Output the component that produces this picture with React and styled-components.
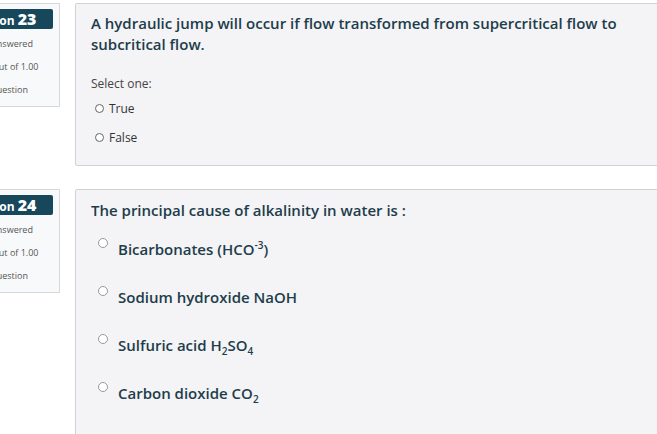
import React from "react";
import styled, { createGlobalStyle } from "styled-components";

const Global = createGlobalStyle`
  html, body {
    margin: 0;
    padding: 0;
    background: #ffffff;
    overflow: hidden;
  }
  body {
    font-family: "Open Sans", Lato, sans-serif;
    color: #1d3d4a;
  }
`;

const Page = styled.div`
  display: flex;
  flex-direction: column;
  gap: 23px;
  padding-top: 3px;
  margin-left: -52px;
  width: 720px;
`;

const QuestionRow = styled.div`
  display: flex;
  align-items: flex-start;
  gap: 15px;
`;

const Info = styled.div`
  width: 112px;
  flex: none;
  box-sizing: border-box;
  height: 104px;
  background: #f8f9fa;
  border: 1px solid #d6d8db;
  padding: 5px 6px 0 6px;
  display: flex;
  flex-direction: column;
`;

const Badge = styled.div`
  background: #17475a;
  color: #ffffff;
  height: 20px;
  border-radius: 2px;
  display: flex;
  align-items: baseline;
  padding: 0 4px 0 5px;
  font-size: 12px;
  font-weight: 700;
  line-height: 20px;
  white-space: nowrap;
  margin-bottom: 3px;

  b {
    font-size: 16px;
    margin-left: 3px;
  }
`;

const InfoLine = styled.div`
  display: flex;
  align-items: center;
  gap: 3px;
  font-size: 9px;
  color: #555;
  line-height: 23px;
  padding-left: 4px;
  white-space: nowrap;
`;

const Content = styled.div`
  flex: 1;
  box-sizing: border-box;
  background: #f4f3f6;
  border: 1px solid #d2d2d4;
  border-radius: 2px;
  padding: ${(p) => p.$pad};
  min-height: ${(p) => p.$minH};
`;

const QText = styled.div`
  font-size: 15px;
  font-weight: 600;
  line-height: 21px;
  color: #1d3d4a;
`;

const Prompt = styled.div`
  font-size: 12px;
  color: #444;
  margin-top: 20px;
  margin-bottom: 2px;
`;

const SmallOption = styled.label`
  display: flex;
  align-items: center;
  gap: 5px;
  padding-left: 4px;
  height: 29px;
  font-size: 12px;
  color: #333;
`;

const Radio = styled.span`
  display: inline-block;
  box-sizing: border-box;
  width: ${(p) => p.$size}px;
  height: ${(p) => p.$size}px;
  border-radius: 50%;
  border: 1px solid ${(p) => p.$color};
  background: #fff;
  flex: none;
`;

const BigOptions = styled.div`
  display: flex;
  flex-direction: column;
  margin-top: 14px;
`;

const BigOption = styled.label`
  display: flex;
  align-items: flex-start;
  gap: 10px;
  padding-left: 7px;
  height: 48px;
  font-size: 15px;
  font-weight: 600;
  color: #1d3d4a;

  ${Radio} {
    margin-top: 3px;
  }

  span.txt {
    margin-top: 4px;
    line-height: 21px;
  }

  sub, sup {
    font-size: 10px;
    line-height: 0;
  }
`;

const questionBig = [
  <>Bicarbonates (HCO<sup>-3</sup>)</>,
  <>Sodium hydroxide NaOH</>,
  <>Sulfuric acid H<sub>2</sub>SO<sub>4</sub></>,
  <>Carbon dioxide CO<sub>2</sub></>,
];

function Flag() {
  return (
    <svg width="10" height="10" viewBox="0 0 10 10">
      <path d="M1.5 0.5v9M1.5 1h6l-1.5 2.2L7.5 5.5h-6" fill="none" stroke="#777" strokeWidth="1" />
    </svg>
  );
}

function InfoBox({ n }) {
  return (
    <Info>
      <Badge>
        Question<b>{n}</b>
      </Badge>
      <InfoLine>Not yet answered</InfoLine>
      <InfoLine>Marked out of 1.00</InfoLine>
      <InfoLine>
        <Flag />
        Flag question
      </InfoLine>
    </Info>
  );
}

export default function App() {
  return (
    <>
      <Global />
      <Page>
        <QuestionRow>
          <InfoBox n={23} />
          <Content $pad="9px 15px 10px 15px" $minH="163px">
            <QText>
              A hydraulic jump will occur if flow transformed from supercritical flow to
              subcritical flow.
            </QText>
            <Prompt>Select one:</Prompt>
            <SmallOption>
              <Radio $size={9} $color="#666" />
              True
            </SmallOption>
            <SmallOption>
              <Radio $size={9} $color="#666" />
              False
            </SmallOption>
          </Content>
        </QuestionRow>
        <QuestionRow>
          <InfoBox n={24} />
          <Content $pad="10px 15px" $minH="260px">
            <QText>The principal cause of alkalinity in water is :</QText>
            <BigOptions>
              {questionBig.map((o, i) => (
                <BigOption key={i}>
                  <Radio $size={10} $color="#9a9a9a" />
                  <span className="txt">{o}</span>
                </BigOption>
              ))}
            </BigOptions>
          </Content>
        </QuestionRow>
      </Page>
    </>
  );
}
